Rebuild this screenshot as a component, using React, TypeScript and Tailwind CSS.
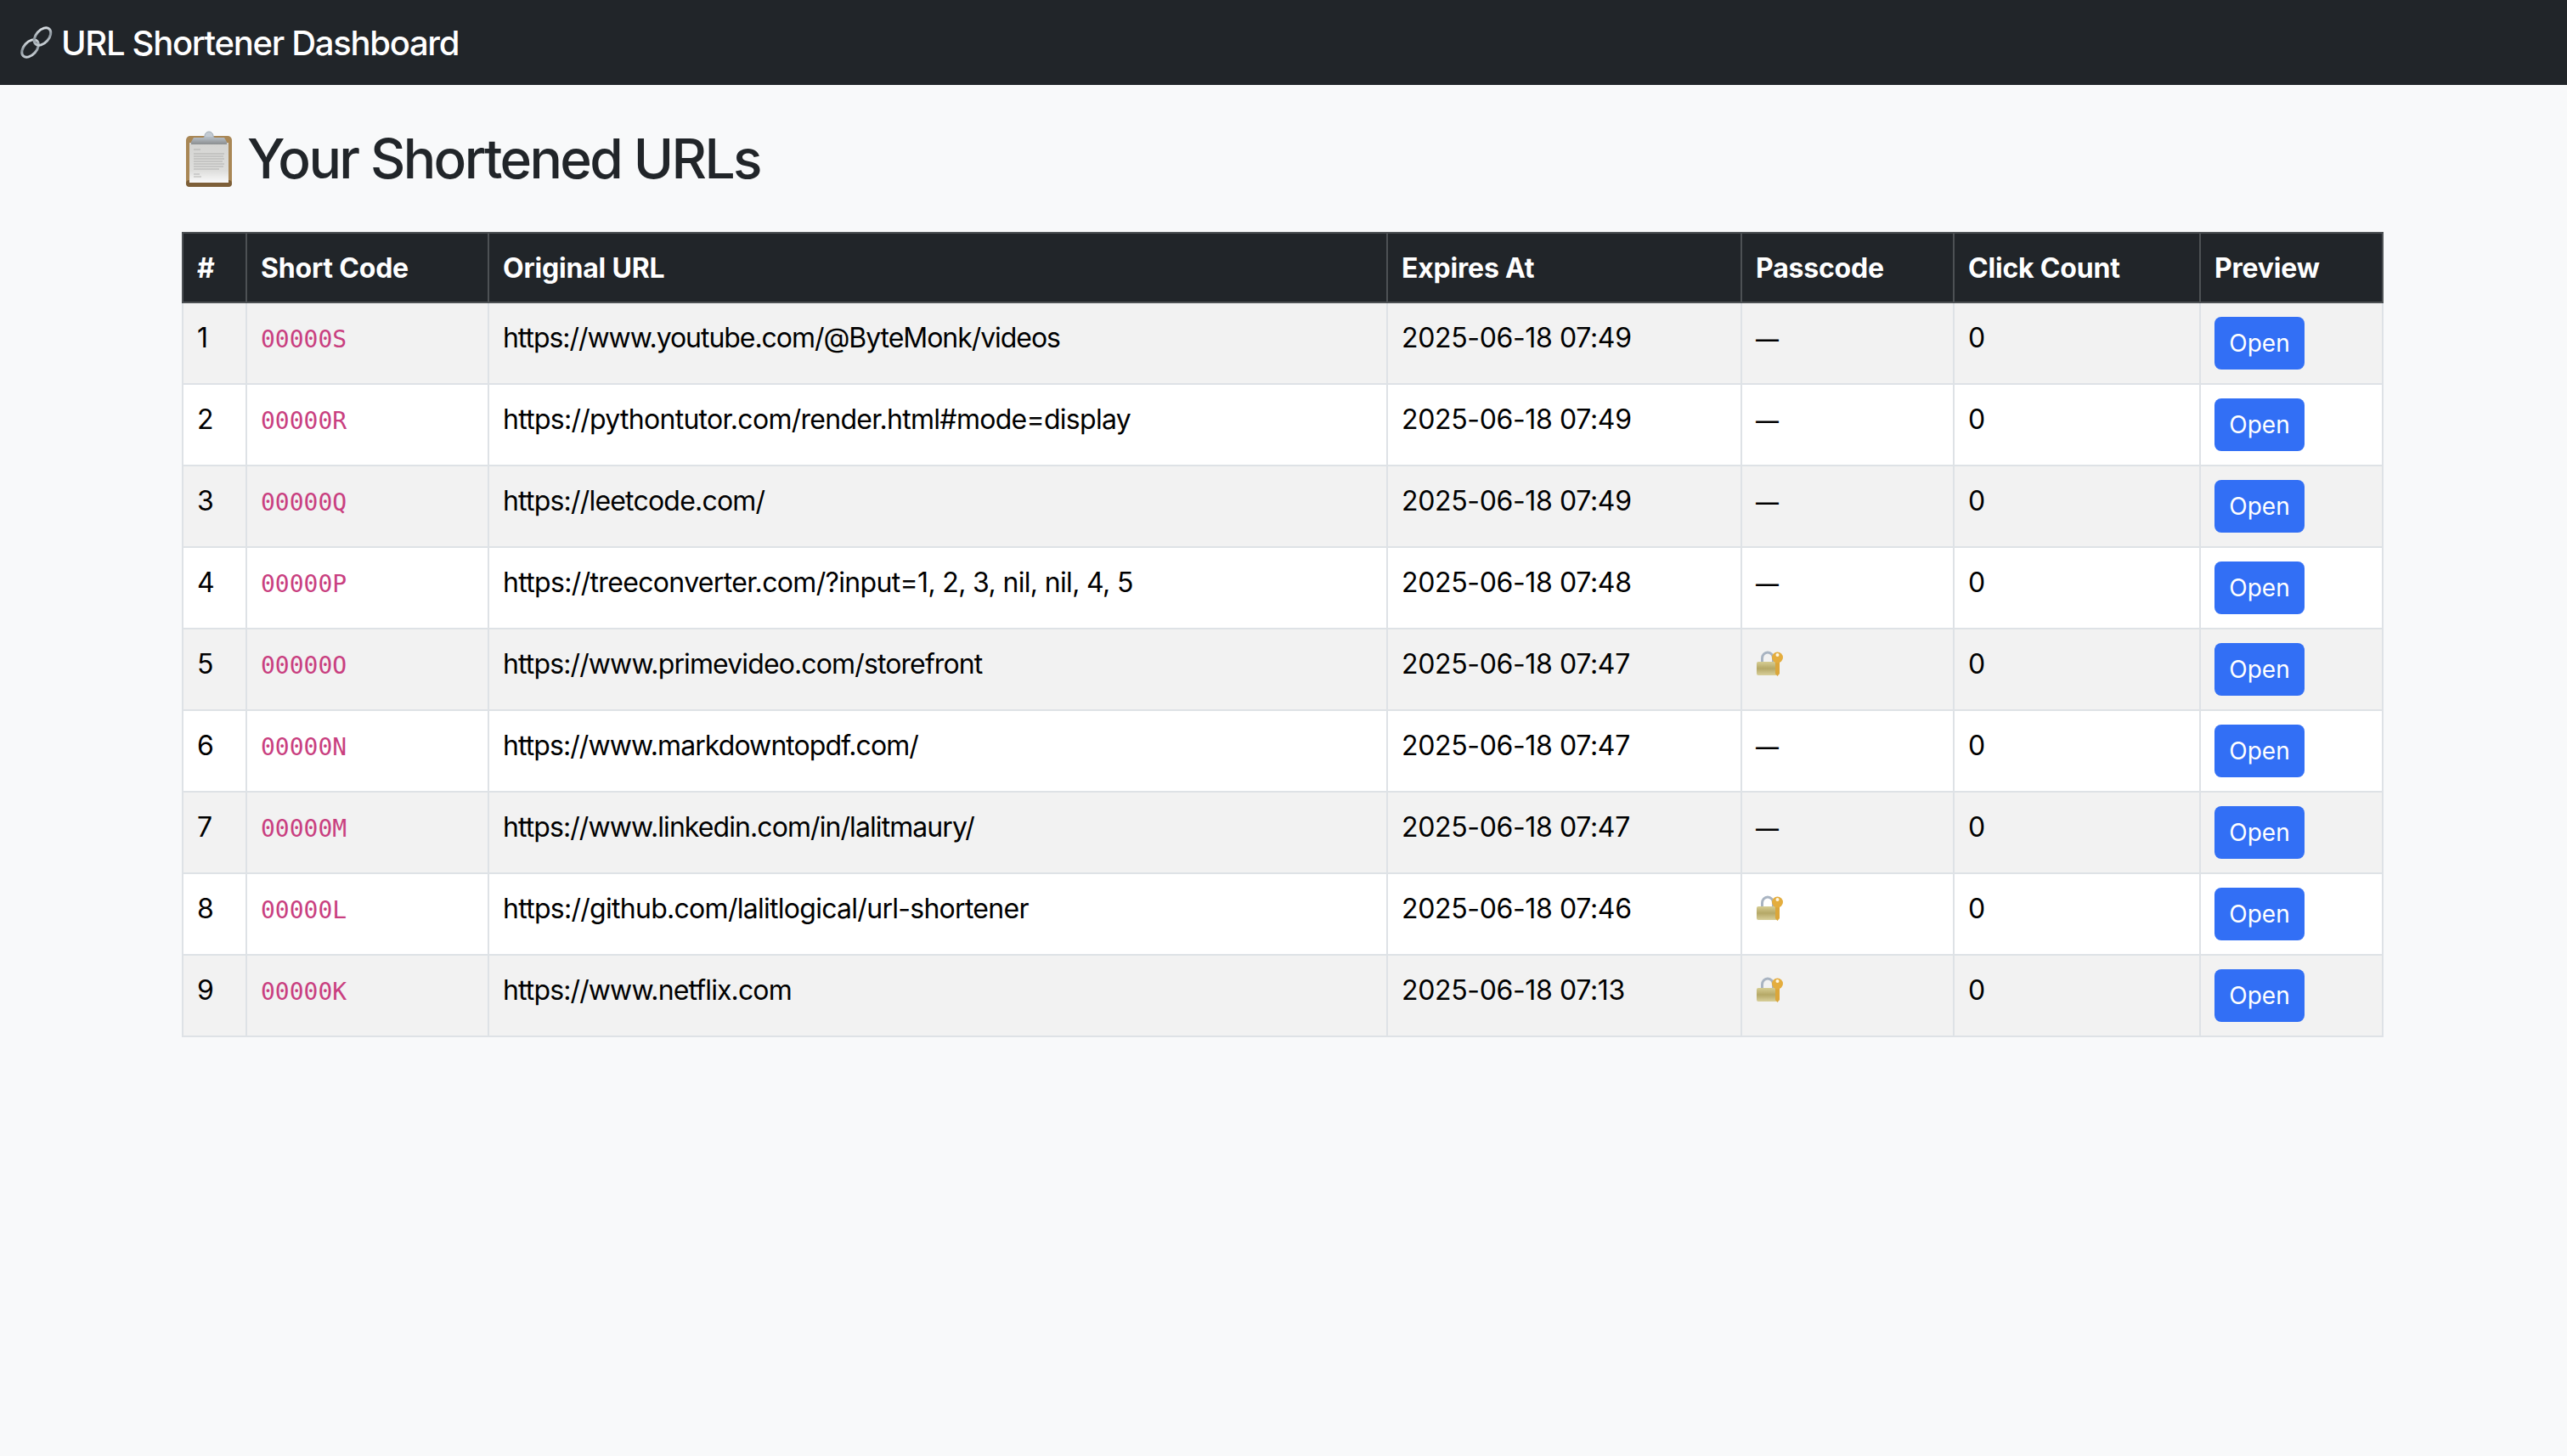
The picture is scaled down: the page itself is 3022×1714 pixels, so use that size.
const rows = [
  { code: "00000S", url: "https://www.youtube.com/@ByteMonk/videos", expires: "2025-06-18 07:49", locked: false, tracking: "tracking-[-1.05px]" },
  { code: "00000R", url: "https://pythontutor.com/render.html#mode=display", expires: "2025-06-18 07:49", locked: false, tracking: "tracking-[-0.72px]" },
  { code: "00000Q", url: "https://leetcode.com/", expires: "2025-06-18 07:49", locked: false, tracking: "tracking-[-0.8px]" },
  { code: "00000P", url: "https://treeconverter.com/?input=1, 2, 3, nil, nil, 4, 5", expires: "2025-06-18 07:48", locked: false, tracking: "tracking-[-0.66px]" },
  { code: "00000O", url: "https://www.primevideo.com/storefront", expires: "2025-06-18 07:47", locked: true, tracking: "tracking-[-0.88px]" },
  { code: "00000N", url: "https://www.markdowntopdf.com/", expires: "2025-06-18 07:47", locked: false, tracking: "tracking-[-0.93px]" },
  { code: "00000M", url: "https://www.linkedin.com/in/lalitmaury/", expires: "2025-06-18 07:47", locked: false, tracking: "tracking-[-0.92px]" },
  { code: "00000L", url: "https://github.com/lalitlogical/url-shortener", expires: "2025-06-18 07:46", locked: true, tracking: "tracking-[-0.72px]" },
  { code: "00000K", url: "https://www.netflix.com", expires: "2025-06-18 07:13", locked: true, tracking: "tracking-[-0.88px]" },
];

const headers = ["#", "Short Code", "Original URL", "Expires At", "Passcode", "Click Count", "Preview"];

const LinkEmoji = () => (
  <svg width="40" height="40" viewBox="0 0 40 40" fill="none" className="shrink-0">
    <defs>
      <linearGradient id="chain" x1="0" y1="0" x2="1" y2="1">
        <stop offset="0" stopColor="#f4f8fb" />
        <stop offset="0.5" stopColor="#8d979f" />
        <stop offset="1" stopColor="#dfe5ea" />
      </linearGradient>
    </defs>
    <ellipse cx="12.5" cy="27" rx="7.5" ry="12" transform="rotate(42 12.5 27)" stroke="url(#chain)" strokeWidth="3" />
    <ellipse cx="27" cy="13" rx="7.5" ry="12" transform="rotate(42 27 13)" stroke="url(#chain)" strokeWidth="3" />
  </svg>
);

const ClipboardEmoji = () => (
  <svg width="56" height="66" viewBox="0 0 56 66" className="shrink-0 ml-1">
    <defs>
      <linearGradient id="paper" x1="0" y1="0" x2="0" y2="1">
        <stop offset="0" stopColor="#d4d4d2" />
        <stop offset="0.7" stopColor="#dededc" />
        <stop offset="1" stopColor="#fafafa" />
      </linearGradient>
      <linearGradient id="clip" x1="0" y1="0" x2="0" y2="1">
        <stop offset="0" stopColor="#b4bcc4" />
        <stop offset="1" stopColor="#8b8e90" />
      </linearGradient>
    </defs>
    <rect x="1" y="6" width="54" height="60" rx="5" fill="#a98755" />
    <rect x="1" y="58" width="54" height="8" rx="4" fill="#7d5f38" />
    <rect x="5" y="14" width="46" height="47" fill="url(#paper)" />
    <path d="M23 6 a5 5 0 0 1 10 0 l1 2 h-12 z" fill="#c2cad2" stroke="#a3adb7" strokeWidth="1" />
    <path d="M10 8 h36 l3 5 v3 H7 v-3 z" fill="url(#clip)" />
    <g stroke="#a6a6a4" strokeWidth="0.8">
      <path d="M10 22 h8" />
      <path d="M10 27 h36 M10 30 h35 M10 33 h36 M10 36 h34 M10 39 h36 M10 42 h35 M10 45 h30" />
      <path d="M10 51 h7 M10 54 h9" />
    </g>
  </svg>
);

const LockEmoji = () => (
  <svg width="33" height="32" viewBox="0 0 33 32" className="block ml-px">
    <defs>
      <linearGradient id="lockBody" x1="0" y1="0" x2="0" y2="1">
        <stop offset="0" stopColor="#d6cd93" />
        <stop offset="0.5" stopColor="#b5a867" />
        <stop offset="1" stopColor="#d8cf9a" />
      </linearGradient>
    </defs>
    <path d="M6.5 14 V9 a6.5 7 0 0 1 13 0 v5" fill="none" stroke="#a9b4c2" strokeWidth="3" />
    <rect x="0" y="13" width="25" height="16" rx="2" fill="url(#lockBody)" />
    <path d="M22 11 h5 v16 l-2.5 3 -2.5 -3 z" fill="#dba63a" />
    <circle cx="24.5" cy="8" r="6.5" fill="#e4ad3e" />
    <circle cx="24.5" cy="5" r="2" fill="#fdf6e3" />
  </svg>
);

export default function App() {
  return (
    <div className="min-h-[1714px] bg-[#f8f9fa] font-['Inter',sans-serif] text-[32px] leading-[48px] text-[#212529]">
      <nav className="h-[100px] bg-[#212529] flex items-center px-[23px] gap-[9px]">
        <LinkEmoji />
        <span className="pt-[2px] text-[40px] leading-[60px] font-medium tracking-[-1.3px] text-white">URL Shortener Dashboard</span>
      </nav>

      <div className="max-w-[2640px] mx-auto pl-[23px] pr-[25px] mt-12">
        <h2 className="flex items-center gap-[17px] text-[64px] leading-[77px] font-medium tracking-[-2.6px] mb-12">
          <ClipboardEmoji />
          Your Shortened URLs
        </h2>

        <table className="w-full table-fixed border-collapse text-black">
          <colgroup>
            <col className="w-[75px]" />
            <col className="w-[285px]" />
            <col className="w-[1058px]" />
            <col className="w-[417px]" />
            <col className="w-[250px]" />
            <col className="w-[290px]" />
            <col />
          </colgroup>
          <thead>
            <tr>
              {headers.map((h) => (
                <th key={h} className="border-2 border-[#4d5154] bg-[#212529] text-white text-left font-bold tracking-[-0.2px] px-4 pt-[17px] pb-[15px] align-bottom">
                  {h}
                </th>
              ))}
            </tr>
          </thead>
          <tbody>
            {rows.map((row, i) => {
              const base = "border-2 border-[#dee2e6] align-top " + (i % 2 === 0 ? "bg-[#f2f2f2]" : "bg-white");
              const cell = base + " px-4 pt-[17px] pb-[15px]";
              return (
                <tr key={row.code}>
                  <td className={cell}>{i + 1}</td>
                  <td className={cell}>
                    <code className="font-['DejaVu_Sans_Mono',monospace] text-[28px] text-[#c93f80]">{row.code}</code>
                  </td>
                  <td className={cell + " " + row.tracking}>{row.url}</td>
                  <td className={cell + " tracking-[-0.35px]"}>{row.expires}</td>
                  <td className={cell}>
                    {row.locked ? (
                      <div className="h-12 pt-2">
                        <LockEmoji />
                      </div>
                    ) : (
                      <span className="text-[27px] font-medium">—</span>
                    )}
                  </td>
                  <td className={cell}>0</td>
                  <td className={base + " p-4"}>
                    <button className="block w-[106px] h-[62px] rounded-lg bg-[#326ff5] text-white text-[28px] leading-[42px]">Open</button>
                  </td>
                </tr>
              );
            })}
          </tbody>
        </table>
      </div>
    </div>
  );
}
